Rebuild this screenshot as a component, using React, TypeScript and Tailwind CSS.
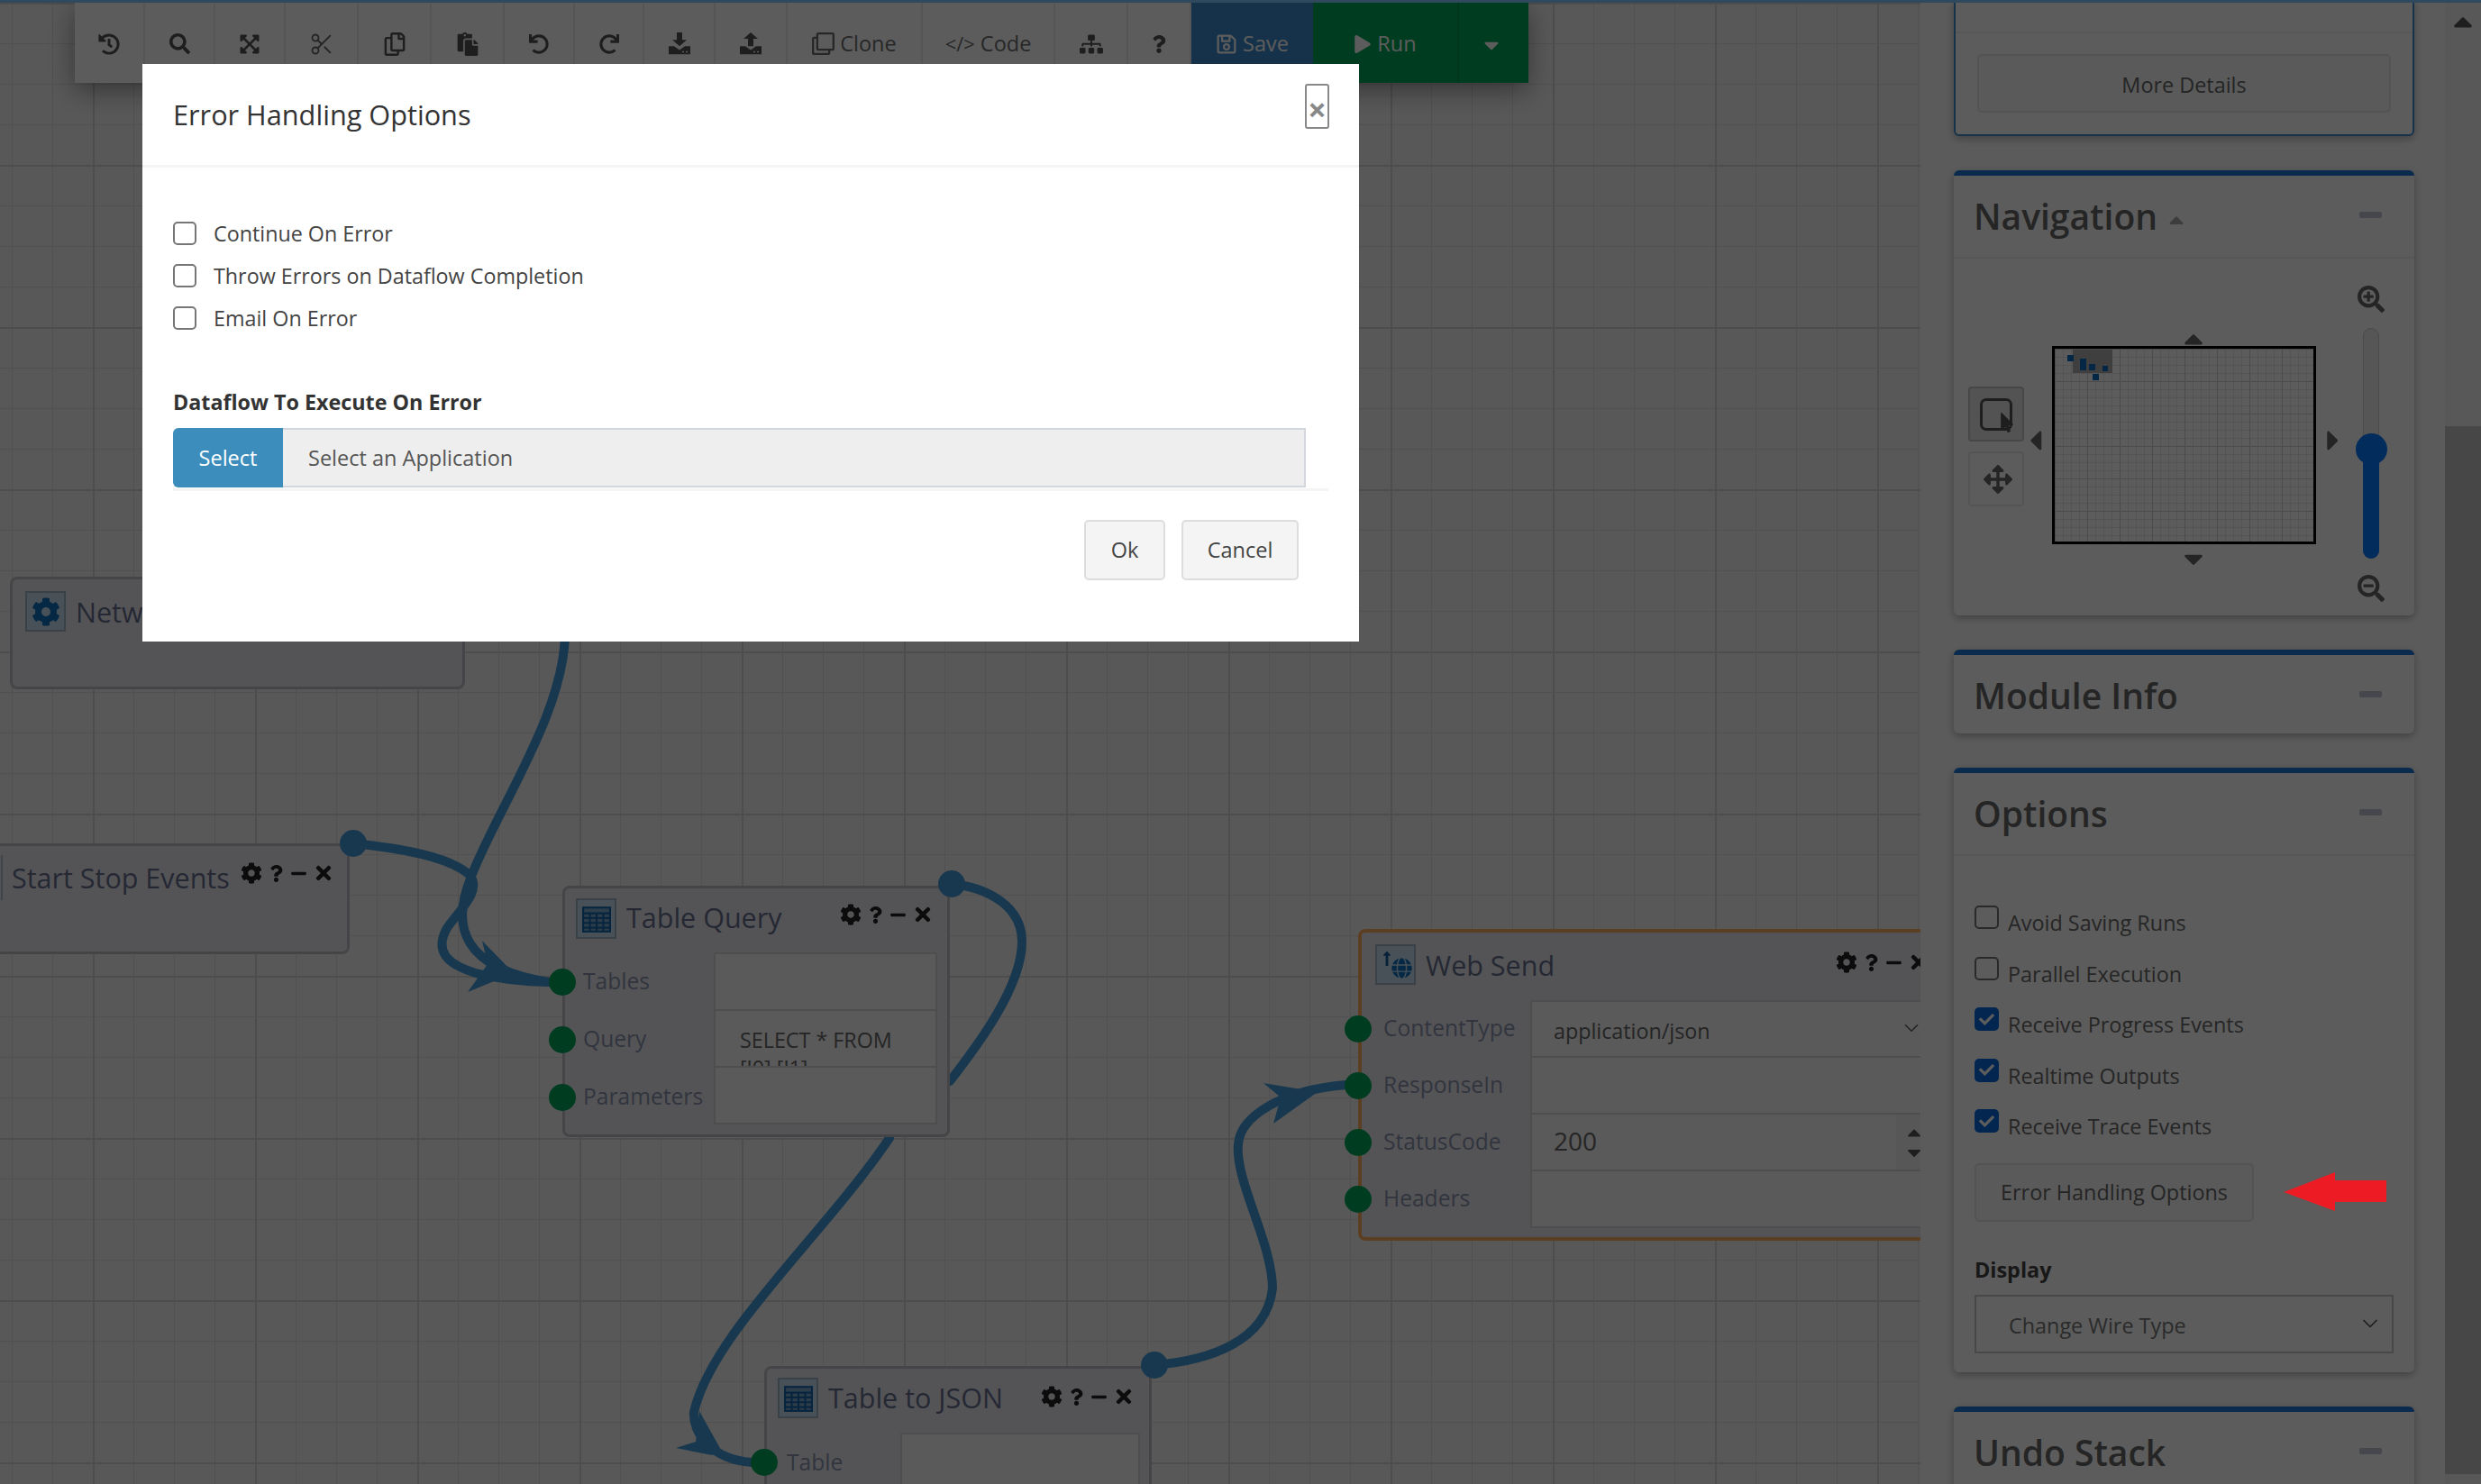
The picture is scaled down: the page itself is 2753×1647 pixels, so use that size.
import type { ReactNode } from 'react';
import {
  FaCaretDown,
  FaCaretLeft,
  FaCaretRight,
  FaCaretUp,
  FaArrowsAlt,
  FaCheck,
  FaCog,
  FaExpandArrowsAlt,
  FaGlobe,
  FaHistory,
  FaLongArrowAltUp,
  FaMinus,
  FaMousePointer,
  FaPaste,
  FaPlay,
  FaQuestion,
  FaRedo,
  FaRegClone,
  FaRegCopy,
  FaRegSave,
  FaSearch,
  FaSearchMinus,
  FaSearchPlus,
  FaSitemap,
  FaTimes,
  FaUndo,
} from 'react-icons/fa';
import { ChevronDown, Scissors } from 'lucide-react';

function TrayIcon({ up }: { up?: boolean }) {
  return (
    <svg width="24" height="25" viewBox="0 0 24 36" preserveAspectRatio="none" className="fill-[#555]">
      <path d="M0 22h6l6 6 6-6h6v13H0z" />
      <rect x="15" y="30" width="2" height="2" fill="#fff" />
      <rect x="19" y="30" width="2" height="2" fill="#fff" />
      {up ? <path d="M12 0l8 10h-5v12H9V10H4z" /> : <path d="M9 0h6v12h5l-8 10-8-10h5z" />}
    </svg>
  );
}

function Tool({ className, children }: { className: string; children: ReactNode }) {
  return (
    <div className={`flex h-full shrink-0 items-center justify-center gap-[6px] border-r-2 border-[#ececec] pt-[2px] text-[23.5px] text-[#6e6e6e] ${className}`}>
      {children}
    </div>
  );
}

function Toolbar() {
  return (
    <div className="absolute left-[83px] top-[3px] flex h-[89px] bg-white shadow-[0_8px_28px_rgba(0,0,0,0.4)]">
      <Tool className="w-[78px] text-[#555]"><FaHistory size={24} /></Tool>
      <Tool className="w-[78px] text-[#555]"><FaSearch size={23} /></Tool>
      <Tool className="w-[78px] text-[#555]"><FaExpandArrowsAlt size={24} /></Tool>
      <Tool className="w-[81px] text-[#666]"><Scissors size={28} strokeWidth={1.6} /></Tool>
      <Tool className="w-[81px] text-[#555]"><FaRegCopy size={26} /></Tool>
      <Tool className="w-[81px] text-[#555]"><FaPaste size={26} /></Tool>
      <Tool className="w-[78px] text-[#555]"><FaUndo size={22} /></Tool>
      <Tool className="w-[77px] text-[#555]"><FaRedo size={22} /></Tool>
      <Tool className="w-[79px]"><TrayIcon /></Tool>
      <Tool className="w-[80px]"><TrayIcon up /></Tool>
      <Tool className="w-[150px]"><FaRegClone size={25} />Clone</Tool>
      <Tool className="w-[147px] gap-[4px]"><span className="text-[22px]">&lt;/&gt;</span>Code</Tool>
      <Tool className="w-[81px] text-[#555]"><FaSitemap size={26} /></Tool>
      <Tool className="w-[70px] border-r-0 text-[#555]"><FaQuestion size={20} /></Tool>
      <div className="flex h-full w-[135px] items-center justify-center gap-[6px] bg-[#3d8bcd] pt-[2px] text-[23.5px] text-white">
        <FaRegSave size={24} />Save
      </div>
      <div className="flex h-full w-[162px] items-center justify-center gap-[6px] border-r-2 border-[#009a4d] bg-[#00a859] pt-[2px] text-[23.5px] text-white">
        <FaPlay size={20} />Run
      </div>
      <div className="flex h-full w-[77px] items-center justify-center bg-[#00a859] pr-[6px] pt-[4px] text-white">
        <FaCaretDown size={26} />
      </div>
    </div>
  );
}

function TableIcon() {
  return (
    <svg width="32" height="32" viewBox="0 0 30 30">
      <rect x="1" y="3" width="28" height="25" fill="#7fa8cc" stroke="#1668b0" strokeWidth="2" />
      <path d="M1 9h28M1 14h28M1 19h28M1 24h28M8 9v19M15 9v19M22 9v19" stroke="#1668b0" strokeWidth="2" />
    </svg>
  );
}

function Controls({ className }: { className: string }) {
  return (
    <div className={`absolute flex items-center gap-[6px] text-[#222] ${className}`}>
      <FaCog size={24} />
      <FaQuestion size={19} />
      <FaMinus size={19} />
      <FaTimes size={24} />
    </div>
  );
}

function Port({ className, out }: { className: string; out?: boolean }) {
  return (
    <div className={`absolute size-[30px] rounded-full ${out ? 'bg-[#439cdb]' : 'bg-[#00a85a]'} ${className}`} />
  );
}

function IconBox({ className, children }: { className: string; children: ReactNode }) {
  return (
    <div className={`absolute flex size-[45px] items-center justify-center border-2 border-[#a0b4c4] bg-[#c8e0f0] text-[#0f6fc0] ${className}`}>
      {children}
    </div>
  );
}

function NodeInput({ className, children }: { className: string; children?: ReactNode }) {
  return (
    <div className={`absolute overflow-hidden border-2 border-[#d8d8dc] bg-[#f8f8f8] text-[23.3px] text-[#666] ${className}`}>
      {children}
    </div>
  );
}

function NodeLabel({ className, children }: { className: string; children: ReactNode }) {
  return <div className={`absolute text-[24.6px] leading-[32px] text-[#8a93ad] ${className}`}>{children}</div>;
}

function Title({ className, children }: { className: string; children: ReactNode }) {
  return <div className={`absolute text-[30.5px] font-medium leading-[40px] text-[#66708f] ${className}`}>{children}</div>;
}

function Wires() {
  return (
    <svg width="2131" height="1647" className="absolute left-0 top-0" fill="none" stroke="#439cdb" strokeWidth="10" strokeLinecap="round">
      <path d="M627 700C628 790 550 900 522 975C500 1030 515 1075 609 1090" />
      <path d="M392 936C440 941 500 950 522 972C534 990 510 1010 496 1030C482 1055 495 1070 528 1080C555 1087 585 1090 609 1090" />
      <path d="M1056 981C1095 985 1134 1005 1134 1045C1134 1095 1085 1160 1054 1200" />
      <path d="M987 1263C915 1370 790 1480 770 1567C768 1590 790 1620 834 1623" />
      <path d="M1281 1515C1340 1510 1405 1490 1412 1430C1412 1380 1370 1310 1374 1270C1376 1240 1420 1210 1494 1204" />
      <g fill="#439cdb" stroke="none">
        <path d="M570 1080L535 1044L541 1070L519 1101Z" />
        <path d="M800 1609L776 1566L772 1600L750 1607L790 1615Z" />
        <path d="M1462 1212L1402 1202L1421 1218L1413 1247Z" />
      </g>
    </svg>
  );
}

function Canvas() {
  return (
    <div className="relative h-full w-[2131px] shrink-0 overflow-hidden bg-[#f4f4f4] bg-[linear-gradient(#d4d4d4_2px,transparent_2px),linear-gradient(90deg,#d4d4d4_2px,transparent_2px),linear-gradient(#e0e0e0_1px,transparent_1px),linear-gradient(90deg,#e0e0e0_1px,transparent_1px)] bg-[size:180px_180px,180px_180px,45px_45px,45px_45px] bg-[position:0_3px,103px_0,0_3px,13px_0]">
      <Wires />

      {/* Network */}
      <div className="absolute left-[11px] top-[640px] h-[125px] w-[505px] rounded-[8px] border-[3px] border-[#c0c0c8] bg-[#e9e9f0]">
        <IconBox className="left-[14px] top-[13px]"><FaCog size={32} /></IconBox>
        <Title className="left-[70px] top-[16px]">Network</Title>
      </div>

      {/* Start Stop Events */}
      <div className="absolute left-[-60px] top-[936px] h-[123px] w-[448px] rounded-[8px] border-[3px] border-[#c0c0c8] bg-[#e9e9f0]">
        <div className="absolute left-[58px] top-[10px] h-[50px] w-[2px] bg-[#a9bdcc]" />
        <Title className="left-[70px] top-[15px] whitespace-nowrap">Start Stop Events</Title>
        <Controls className="left-[324px] top-[18px]" />
      </div>
      <Port out className="left-[377px] top-[921px]" />

      {/* Table Query */}
      <div className="absolute left-[624px] top-[983px] h-[279px] w-[430px] rounded-[8px] border-[3px] border-[#c0c0c8] bg-[#e9e9f0]">
        <IconBox className="left-[12px] top-[11px]"><TableIcon /></IconBox>
        <Title className="left-[68px] top-[12px] whitespace-nowrap">Table Query</Title>
        <Controls className="left-[305px] top-[17px]" />
        <NodeLabel className="left-[20px] top-[87px]">Tables</NodeLabel>
        <NodeLabel className="left-[20px] top-[151px]">Query</NodeLabel>
        <NodeLabel className="left-[20px] top-[215px]">Parameters</NodeLabel>
        <NodeInput className="left-[165px] top-[71px] h-[65px] w-[248px]" />
        <NodeInput className="left-[165px] top-[134px] h-[65px] w-[248px] pl-[27px] pt-[17px] leading-[31px]">
          SELECT * FROM
          <br />
          [!0] [!1]
        </NodeInput>
        <NodeInput className="left-[165px] top-[197px] h-[65px] w-[248px]" />
      </div>
      <Port className="left-[609px] top-[1075px]" />
      <Port className="left-[609px] top-[1139px]" />
      <Port className="left-[609px] top-[1203px]" />
      <Port out className="left-[1041px] top-[966px]" />

      {/* Web Send */}
      <div className="absolute left-[1507px] top-[1031px] h-[346px] w-[700px] rounded-[8px] border-[4px] border-[#ffb060] bg-[#e9e9f0]">
        <IconBox className="left-[15px] top-[13px]">
          <FaLongArrowAltUp size={18} className="-mr-[4px] -mt-[14px] text-[#0f5a9a]" />
          <FaGlobe size={23} className="mt-[8px]" />
        </IconBox>
        <Title className="left-[71px] top-[16px] whitespace-nowrap">Web Send</Title>
        <Controls className="left-[526px] top-[21px]" />
        <NodeLabel className="left-[24px] top-[90px]">ContentType</NodeLabel>
        <NodeLabel className="left-[24px] top-[153px]">ResponseIn</NodeLabel>
        <NodeLabel className="left-[24px] top-[216px]">StatusCode</NodeLabel>
        <NodeLabel className="left-[24px] top-[279px]">Headers</NodeLabel>
        <NodeInput className="left-[187px] top-[75px] h-[64px] w-[500px] pl-[24px] pt-[16px] leading-[32px]">
          application/json
          <ChevronDown size={26} strokeWidth={1.5} className="absolute left-[408px] top-[16px]" />
        </NodeInput>
        <NodeInput className="left-[187px] top-[137px] h-[65px] w-[500px]" />
        <NodeInput className="left-[187px] top-[200px] h-[65px] w-[500px] pl-[24px] pt-[13px] text-[28px] leading-[32px] text-[#555]">
          200
          <div className="absolute left-[404px] top-0 flex h-full w-[34px] flex-col items-center justify-center gap-[4px] bg-[#f0f0f0] pl-[6px] text-[#555]">
            <FaCaretUp size={24} className="-mb-[4px]" />
            <FaCaretDown size={24} className="-mt-[2px]" />
          </div>
        </NodeInput>
        <NodeInput className="left-[187px] top-[263px] h-[65px] w-[500px]" />
      </div>
      <Port className="left-[1492px] top-[1127px]" />
      <Port className="left-[1492px] top-[1190px]" />
      <Port className="left-[1492px] top-[1253px]" />
      <Port className="left-[1492px] top-[1316px]" />

      {/* Table to JSON */}
      <div className="absolute left-[848px] top-[1516px] h-[200px] w-[430px] rounded-[8px] border-[3px] border-[#c0c0c8] bg-[#e9e9f0]">
        <IconBox className="left-[12px] top-[10px]"><TableIcon /></IconBox>
        <Title className="left-[68px] top-[12px] whitespace-nowrap">Table to JSON</Title>
        <Controls className="left-[304px] top-[19px]" />
        <NodeLabel className="left-[22px] top-[88px]">Table</NodeLabel>
        <NodeInput className="left-[148px] top-[71px] h-[100px] w-[266px]" />
      </div>
      <Port className="left-[833px] top-[1608px]" />
      <Port out className="left-[1266px] top-[1500px]" />

      <Toolbar />
    </div>
  );
}

function PanelHeader({ title, caret, className }: { title: string; caret?: boolean; className: string }) {
  return (
    <div className={`flex items-start pl-[22px] pr-[36px] ${className}`}>
      <h2 className="text-[39px] font-semibold leading-[54px] text-[#666]">{title}</h2>
      {caret && <FaCaretUp size={26} className="ml-[8px] mt-[18px] text-[#aaa]" />}
      <div className="ml-auto mt-[22px] h-[7px] w-[25px] rounded-[2px] bg-[#c0c4d4]" />
    </div>
  );
}

function Panel({ children }: { children: ReactNode }) {
  return (
    <section className="rounded-[6px] border-t-[6px] border-[#1c78d8] bg-white shadow-[0_3px_10px_rgba(0,0,0,0.3)]">
      {children}
    </section>
  );
}

function Navigation() {
  return (
    <Panel>
      <PanelHeader title="Navigation" caret className="h-[92px] border-b-2 border-[#f2f2f2] pt-[18px]" />
      <div className="flex h-[396px] pl-[16px]">
        <div className="flex w-[62px] flex-col gap-[11px] pt-[142px]">
          <div className="relative flex h-[61px] items-center justify-center rounded-[4px] border-2 border-[#c4c4c4] bg-[#e6e6e6] text-[#555]">
            <div className="size-[36px] rounded-[7px] border-[3px] border-[#555]" />
            <FaMousePointer size={22} className="absolute left-[30px] top-[27px]" />
          </div>
          <div className="flex h-[61px] items-center justify-center rounded-[4px] border-2 border-[#e8e8e8] bg-white pl-[4px] text-[#666]">
            <FaArrowsAlt size={32} />
          </div>
        </div>
        <div className="flex w-[31px] items-center justify-center pr-[6px] pt-[8px] text-[#666]">
          <FaCaretLeft size={36} />
        </div>
        <div className="flex w-[293px] flex-col pt-[80px]">
          <div className="flex h-[17px] justify-center pl-[20px] text-[#666]"><FaCaretUp size={34} className="-mt-[8px]" /></div>
          <div className="relative h-[220px] border-[3px] border-black bg-white bg-[linear-gradient(#d0d0d0_1px,transparent_1px),linear-gradient(90deg,#d0d0d0_1px,transparent_1px),linear-gradient(#e8e8e8_1px,transparent_1px),linear-gradient(90deg,#e8e8e8_1px,transparent_1px)] bg-[size:36px_36px,36px_36px,9px_9px,9px_9px]">
            <div className="absolute left-[20px] top-[1px] h-[26px] w-[44px] bg-[#b0b0b0]" />
            <div className="absolute left-[14px] top-[7px] size-[7px] bg-[#0a6ebd]" />
            <div className="absolute left-[28px] top-[11px] size-[7px] bg-[#0a6ebd]" />
            <div className="absolute left-[28px] top-[17px] size-[7px] bg-[#0a6ebd]" />
            <div className="absolute left-[38px] top-[17px] size-[7px] bg-[#0a6ebd]" />
            <div className="absolute left-[53px] top-[19px] size-[6px] bg-[#0a6ebd]" />
            <div className="absolute left-[42px] top-[28px] size-[7px] bg-[#0a6ebd]" />
          </div>
          <div className="flex justify-center pl-[20px] text-[#666]"><FaCaretDown size={34} className="-mt-[1px]" /></div>
        </div>
        <div className="flex w-[36px] items-center justify-center pl-[2px] pt-[8px] text-[#666]">
          <FaCaretRight size={36} />
        </div>
        <div className="flex w-[50px] flex-col items-center pt-[30px] text-[#666]">
          <FaSearchPlus size={30} />
          <div className="relative mt-[17px] h-[256px] w-[18px] rounded-full border border-[#ccc] bg-[#eee]">
            <div className="absolute bottom-[-1px] left-[-1px] h-[122px] w-[18px] rounded-b-full bg-[#057aff]" />
            <div className="absolute left-[-9px] top-[116px] size-[35px] rounded-full bg-[#057aff]" />
          </div>
          <FaSearchMinus size={30} className="mt-[18px]" />
        </div>
      </div>
    </Panel>
  );
}

function OptionRow({ label, checked }: { label: string; checked?: boolean }) {
  return (
    <div className="flex h-[56.5px] items-start gap-[10px]">
      {checked ? (
        <div className="flex h-[26px] w-[27px] items-center justify-center rounded-[5px] bg-[#0a69e0] text-white">
          <FaCheck size={17} />
        </div>
      ) : (
        <div className="h-[26px] w-[27px] rounded-[5px] border-2 border-[#767676] bg-white" />
      )}
      <span className="mt-[4px] text-[23.4px] leading-[30px] text-[#6a6a6a]">{label}</span>
    </div>
  );
}

function Sidebar() {
  return (
    <aside className="flex h-full flex-1 bg-[#fdfdfd]">
      <div className="flex w-[582px] flex-col gap-[38px] overflow-hidden pl-[37px] pr-[34px]">
        <section className="h-[151px] shrink-0 rounded-b-[6px] border-x-2 border-b-2 border-[#3e8ed0] bg-white shadow-[0_3px_10px_rgba(0,0,0,0.3)]">
          <div className="h-[37px] border-b-2 border-[#f2f2f2]" />
          <div className="mx-[24px] mt-[23px] flex h-[65px] items-center justify-center rounded-[5px] border-2 border-[#e6e6e6] bg-[#f9f9f9] pt-[4px] text-[23.4px] text-[#666]">
            More Details
          </div>
        </section>
        <div className="shrink-0"><Navigation /></div>
        <div className="shrink-0">
          <Panel>
            <PanelHeader title="Module Info" className="h-[87px] pt-[18px]" />
          </Panel>
        </div>
        <div className="shrink-0">
          <Panel>
            <PanelHeader title="Options" className="h-[92px] border-b-2 border-[#f2f2f2] pt-[18px]" />
            <div className="px-[23px] pb-[21px] pt-[55px]">
              <OptionRow label="Avoid Saving Runs" />
              <OptionRow label="Parallel Execution" />
              <OptionRow label="Receive Progress Events" checked />
              <OptionRow label="Realtime Outputs" checked />
              <OptionRow label="Receive Trace Events" checked />
              <div className="mt-[3px] flex h-[65px] w-[310px] items-center justify-center rounded-[5px] border-2 border-[#e6e6e6] bg-[#f9f9f9] pt-[2px] text-[23.4px] text-[#666]">
                Error Handling Options
              </div>
              <div className="mt-[38px] text-[23.4px] font-bold leading-[30px] text-[#444]">Display</div>
              <div className="mt-[13px] flex h-[65px] w-[465px] items-center justify-between border-2 border-[#c8c8c8] bg-white pl-[36px] pr-[10px] pt-[5px] text-[23.4px] text-[#777]">
                Change Wire Type
                <ChevronDown size={28} strokeWidth={1.5} className="-mt-[5px] text-[#555]" />
              </div>
            </div>
          </Panel>
        </div>
        <div className="shrink-0">
          <Panel>
            <PanelHeader title="Undo Stack" className="h-[92px] pt-[18px]" />
          </Panel>
        </div>
      </div>
      <div className="flex w-[40px] flex-col bg-[#f4f4f4]">
        <div className="flex h-[473px] justify-center pt-[7px] text-[#555]"><FaCaretUp size={34} /></div>
        <div className="h-[1163px] bg-[#c5c5c5]" />
      </div>
    </aside>
  );
}

function ModalCheck({ label }: { label: string }) {
  return (
    <div className="flex h-[47px] items-center gap-[19px]">
      <div className="size-[26px] rounded-[5px] border-2 border-[#767676] bg-white" />
      <span className="text-[23.3px] text-[#444]">{label}</span>
    </div>
  );
}

function ErrorModal() {
  return (
    <div className="absolute left-[158px] top-[71px] h-[641px] w-[1350px] bg-white">
      <div className="flex h-[115px] items-start justify-between border-b-[3px] border-[#f4f4f4] pl-[34px] pr-[33px]">
        <h1 className="mt-[34px] text-[30.7px] font-medium leading-[44px] text-[#333]">Error Handling Options</h1>
        <button className="mt-[22px] flex h-[50px] w-[27px] items-center justify-center rounded-[3px] border-2 border-[#888] pt-[7px] text-[36px] font-bold leading-none text-[#888]">
          ×
        </button>
      </div>
      <div className="pl-[34px] pr-[34px] pt-[49.5px]">
        <ModalCheck label="Continue On Error" />
        <ModalCheck label="Throw Errors on Dataflow Completion" />
        <ModalCheck label="Email On Error" />
        <div className="mt-[53px] text-[23.3px] font-bold leading-[32px] text-[#333]">Dataflow To Execute On Error</div>
        <div className="mt-[13px] border-b-[3px] border-[#f4f4f4] pb-[1px]">
          <div className="flex h-[66px] w-[1257px]">
            <button className="h-full w-[122px] rounded-l-[6px] bg-[#3c8dbc] pt-[2px] text-[23.5px] text-white">Select</button>
            <div className="flex flex-1 items-center border-2 border-l-0 border-[#d2d6de] bg-[#eeeeee] pl-[28px] pt-[2px] text-[23.5px] text-[#555]">
              Select an Application
            </div>
          </div>
        </div>
        <div className="mr-[33px] mt-[32px] flex justify-end gap-[18px]">
          <button className="h-[67px] w-[90px] rounded-[5px] border-2 border-[#dddddd] bg-[#f4f4f4] pt-[2px] text-[23.5px] text-[#444]">Ok</button>
          <button className="h-[67px] w-[130px] rounded-[5px] border-2 border-[#dddddd] bg-[#f4f4f4] pt-[2px] text-[23.5px] text-[#444]">Cancel</button>
        </div>
      </div>
    </div>
  );
}

export default function App() {
  return (
    <div className="relative h-[1647px] w-[2753px] overflow-hidden font-['Open_Sans',sans-serif]">
      <div className="flex h-full">
        <Canvas />
        <Sidebar />
      </div>
      <div className="absolute inset-x-0 top-0 h-[3px] bg-[#82cdff]" />
      {/* modal backdrop */}
      <div className="absolute inset-0 bg-black/[0.64]" />
      <ErrorModal />
      {/* red annotation arrow drawn on the screenshot */}
      <svg width="114" height="43" viewBox="0 0 114 43" className="absolute left-[2534px] top-[1301px]">
        <path d="M0 22L57 0V9H114V33H57V43Z" fill="#ed1c24" />
      </svg>
    </div>
  );
}
